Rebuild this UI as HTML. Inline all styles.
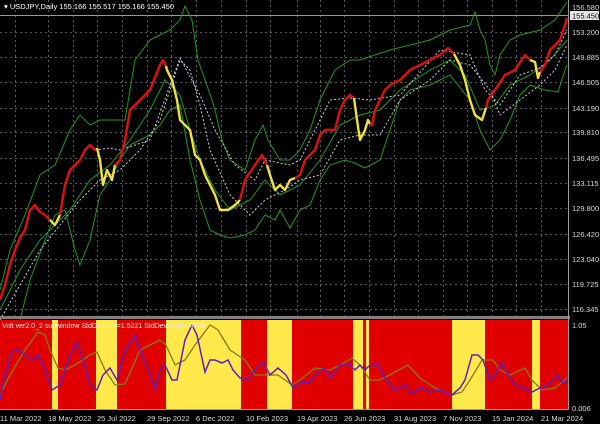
<!DOCTYPE html>
<html><head><meta charset="utf-8"><style>
html,body{margin:0;padding:0;background:#000;}
svg{display:block;font-family:"Liberation Sans",sans-serif;}
</style></head><body>
<svg width="600" height="424" viewBox="0 0 600 424" xmlns="http://www.w3.org/2000/svg">
<rect width="600" height="424" fill="#000"/>
<!-- grid -->
<g stroke="#5a5a5a" stroke-width="1" stroke-dasharray="2,3">
<line x1="0" y1="32.5" x2="568" y2="32.5"/><line x1="0" y1="57.5" x2="568" y2="57.5"/>
<line x1="0" y1="82.5" x2="568" y2="82.5"/><line x1="0" y1="108.5" x2="568" y2="108.5"/>
<line x1="0" y1="132.5" x2="568" y2="132.5"/><line x1="0" y1="158.5" x2="568" y2="158.5"/>
<line x1="0" y1="183.5" x2="568" y2="183.5"/><line x1="0" y1="208.5" x2="568" y2="208.5"/>
<line x1="0" y1="234.5" x2="568" y2="234.5"/><line x1="0" y1="259.5" x2="568" y2="259.5"/>
<line x1="0" y1="284.5" x2="568" y2="284.5"/><line x1="0" y1="309.5" x2="568" y2="309.5"/>
<line x1="15.5" y1="0" x2="15.5" y2="316"/><line x1="48.5" y1="0" x2="48.5" y2="316"/>
<line x1="73.5" y1="0" x2="73.5" y2="316"/><line x1="97.5" y1="0" x2="97.5" y2="316"/>
<line x1="122.5" y1="0" x2="122.5" y2="316"/><line x1="147.5" y1="0" x2="147.5" y2="316"/>
<line x1="171.5" y1="0" x2="171.5" y2="316"/><line x1="196.5" y1="0" x2="196.5" y2="316"/>
<line x1="221.5" y1="0" x2="221.5" y2="316"/><line x1="246.5" y1="0" x2="246.5" y2="316"/>
<line x1="270.5" y1="0" x2="270.5" y2="316"/><line x1="297.5" y1="0" x2="297.5" y2="316"/>
<line x1="320.5" y1="0" x2="320.5" y2="316"/><line x1="344.5" y1="0" x2="344.5" y2="316"/>
<line x1="369.5" y1="0" x2="369.5" y2="316"/><line x1="394.5" y1="0" x2="394.5" y2="316"/>
<line x1="418.5" y1="0" x2="418.5" y2="316"/><line x1="443.5" y1="0" x2="443.5" y2="316"/>
<line x1="467.5" y1="0" x2="467.5" y2="316"/><line x1="492.5" y1="0" x2="492.5" y2="316"/>
<line x1="516.5" y1="0" x2="516.5" y2="316"/><line x1="541.5" y1="0" x2="541.5" y2="316"/>
</g>
<line x1="0" y1="15.5" x2="568" y2="15.5" stroke="#9a9a9a"/>
<!-- bands -->
<g fill="none" stroke="#1f9a1f" stroke-width="1">
<polyline points="0,290 10,250 25,215 40,175 55,165 70,130 80,115 90,125 100,120 110,120 125,120 135,60 150,40 160,35 170,30 180,20 185,6 192,20 198,60 205,80 212,100 215,110 222,140 230,160 245,170 255,140 263,125 268,140 280,160 290,160 295,155 300,150 310,130 320,100 335,70 350,60 360,60 375,55 390,50 410,45 430,40 450,30 470,25 475,12 480,30 485,40 490,65 495,75 500,55 510,40 520,35 540,30 555,20 567,2"/>
<polyline points="20,320 30,280 45,240 55,215 65,210 75,250 80,265 90,240 100,195 110,180 120,160 130,145 140,140 150,135 160,125 170,110 180,105 190,160 200,200 210,230 220,235 230,238 245,235 255,230 265,215 275,220 280,210 290,228 300,210 310,205 320,180 330,165 345,160 355,163 365,168 380,160 390,130 400,100 410,90 430,85 440,80 450,75 470,100 480,130 490,150 500,140 510,120 520,95 530,85 545,90 558,92 565,70 567,65"/>
<polyline points="0,310 20,270 40,240 55,225 70,210 90,180 110,165 130,140 150,110 165,80 180,95 190,130 200,160 215,190 230,210 250,200 265,180 280,195 300,185 320,160 340,125 360,115 380,110 400,90 430,70 450,60 465,75 480,110 495,105 510,85 530,75 550,60 567,40"/>
</g>
<g fill="none" stroke="#c8c8e0" stroke-width="1" stroke-dasharray="2,2">
<polyline points="0,320 20,285 40,250 60,225 80,200 100,180 120,170 140,150 160,120 180,60 190,70 200,105 210,150 230,195 250,215 265,200 285,190 300,180 320,175 340,140 360,135 380,135 400,100 430,80 450,60 470,65 490,90 500,115 520,100 540,85 555,70 567,45"/>
<polyline points="95,150 110,148 120,150 150,140 180,58 200,95 215,130 235,165 255,180 265,160 290,165 300,160 330,100 350,98 370,100 400,95 440,50 470,55 485,90 500,105 520,75 540,68 555,55 567,30"/>
</g>
<!-- price -->
<g fill="none" stroke-width="2.4" stroke-linejoin="round">
<polyline stroke="#e01010" points="0,300 5,285 10,265 15,250 20,238 25,230 30,210 35,205 40,212 45,215 50,220"/>
<polyline stroke="#f0e040" points="50,220 55,225 60,215"/>
<polyline stroke="#e01010" points="60,215 65,185 70,170 75,165 80,160 85,150 90,145 95,150 97,148"/>
<polyline stroke="#f0e040" points="97,148 100,160 103,185 107,170 112,180 115,165"/>
<polyline stroke="#e01010" points="115,165 120,160 125,140 130,110 140,100 150,90 160,65 163,60 166,66"/>
<polyline stroke="#f0e040" points="166,66 167,70 172,80 177,100 180,120 185,125 190,130 195,155 200,160 205,175 210,185 215,195 220,210 228,210 235,205 240,200"/>
<polyline stroke="#e01010" points="240,200 245,180 255,165 262,155 267,165"/>
<polyline stroke="#f0e040" points="267,165 270,175 275,190 280,185 285,190 290,180 295,178"/>
<polyline stroke="#e01010" points="295,178 300,175 305,160 315,150 320,135 325,130 335,130 340,110 345,100 350,95 354,98"/>
<polyline stroke="#f0e040" points="354,98 357,120 360,140 365,130 368,120 370,124"/>
<polyline stroke="#e01010" points="370,124 372,125 375,110 385,90 390,85 400,80 410,70 420,65 430,60 440,55 448,48 454,54"/>
<polyline stroke="#f0e040" points="454,54 460,65 465,80 470,100 475,115 482,120 486,108"/>
<polyline stroke="#e01010" points="486,108 488,100 495,90 505,75 515,70 525,55 530,60"/>
<polyline stroke="#f0e040" points="530,60 535,62 538,78 540,72"/>
<polyline stroke="#e01010" points="540,72 545,65 550,50 560,40 565,25 567,18"/>
</g>
<!-- separator & axes -->
<rect x="0" y="316" width="570" height="3" fill="#808080"/>
<rect x="0" y="320" width="568" height="89" fill="#e00000"/>
<g fill="#ffe84a">
<rect x="52" y="320" width="6" height="89"/><rect x="96" y="320" width="21" height="89"/>
<rect x="166" y="320" width="75" height="89"/><rect x="267" y="320" width="25" height="89"/>
<rect x="353" y="320" width="10" height="89"/><rect x="366" y="320" width="3" height="89"/>
<rect x="452" y="320" width="33" height="89"/><rect x="532" y="320" width="8" height="89"/>
</g>
<polyline fill="none" stroke="#8a7a10" stroke-width="1.3" points="0,395 10,375 25,350 38,332 45,335 50,350 58,368 65,370 75,365 90,355 97,352 105,370 115,385 125,384 140,350 160,340 166,345 175,365 185,360 195,345 210,325 218,330 230,350 245,360 255,375 267,375 278,375 292,385 300,380 315,368 330,370 340,365 352,358 360,365 370,380 380,380 395,372 408,365 420,378 435,388 452,395 462,392 470,380 482,360 493,360 500,370 510,375 525,368 532,380 542,390 555,388 567,378"/>
<polyline fill="none" stroke="#5a20c0" stroke-width="1.5" points="0,400 5,375 12,352 18,350 25,355 33,360 38,355 45,370 52,390 60,385 70,355 77,342 83,360 90,385 97,390 103,375 110,368 117,380 125,350 135,335 142,355 150,375 155,390 160,370 165,365 172,380 177,380 185,340 192,325 197,335 205,372 210,360 215,360 222,363 228,360 233,370 240,378 248,380 255,370 263,362 270,375 278,368 286,375 293,388 300,383 310,382 318,372 325,368 330,378 340,365 350,365 355,370 360,365 365,370 370,365 378,365 383,375 390,385 395,390 405,385 412,394 420,388 430,392 440,390 452,395 460,388 465,380 472,355 478,355 483,360 490,380 495,375 502,362 508,375 515,385 522,388 532,392 540,388 548,385 557,375 563,383 567,380"/>
<line x1="568.5" y1="0" x2="568.5" y2="410" stroke="#9a9a9a"/>
<line x1="0" y1="409.5" x2="569" y2="409.5" stroke="#9a9a9a"/>
<rect x="570" y="11" width="29" height="9" fill="#e8e8e8"/>
<g fill="#d8d8d8" font-size="7.5">
<text x="4" y="9" fill="#fff">▾ USDJPY,Daily  155.166 155.517 155.166 155.450</text>
<text x="572" y="10">156.580</text>
<text x="572" y="18.5" fill="#000">155.450</text>
<text x="572" y="35">153.200</text><text x="572" y="60">149.885</text>
<text x="572" y="85">146.505</text><text x="572" y="111">143.190</text>
<text x="572" y="135">139.810</text><text x="572" y="161">136.495</text>
<text x="572" y="186">133.115</text><text x="572" y="211">129.800</text>
<text x="572" y="237">126.420</text><text x="572" y="262">123.040</text>
<text x="572" y="287">119.725</text><text x="572" y="312">116.345</text>
<text x="572" y="328">1.05</text><text x="572" y="411">0.006</text>
<text x="2" y="328" fill="#ececec" font-size="7">Volt ver2.0_2 subwindow  StdDev(26)=1.5221  StdDev(52)=1.4338</text>
<text x="0" y="421">11 Mar 2022</text><text x="48" y="421">18 May 2022</text>
<text x="97" y="421">25 Jul 2022</text><text x="147" y="421">29 Sep 2022</text>
<text x="196" y="421">6 Dec 2022</text><text x="246" y="421">10 Feb 2023</text>
<text x="297" y="421">19 Apr 2023</text><text x="344" y="421">26 Jun 2023</text>
<text x="394" y="421">31 Aug 2023</text><text x="443" y="421">7 Nov 2023</text>
<text x="492" y="421">15 Jan 2024</text><text x="541" y="421">21 Mar 2024</text>
</g>
</svg>
</body></html>
